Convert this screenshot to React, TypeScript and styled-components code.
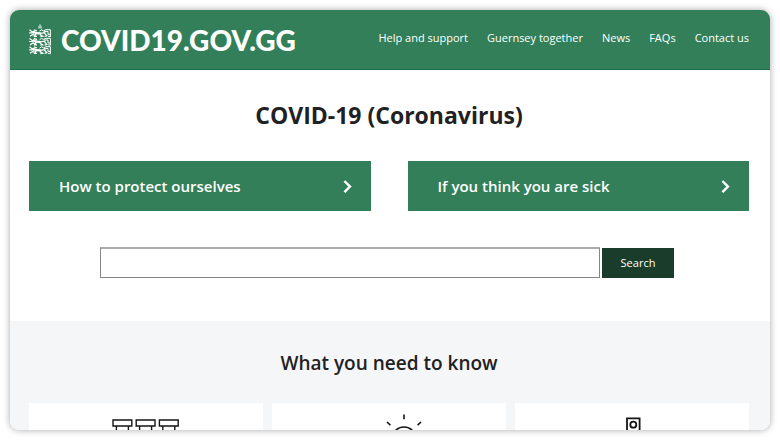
import React from "react";
import styled, { createGlobalStyle } from "styled-components";

const green = "#327f59";

const GlobalStyle = createGlobalStyle`
  *, *::before, *::after { box-sizing: border-box; }
  body {
    margin: 0;
    background: #fff;
    color: #1f2123;
    font-family: "Open Sans", "Noto Sans", sans-serif;
  }
  h1, h2 { margin: 0; }
`;

const Stage = styled.div`
  height: 100vh;
  padding: 10px;
`;

const Frame = styled.div`
  display: flex;
  flex-direction: column;
  height: 100%;
  overflow: hidden;
  border-radius: 9px;
  background: #fff;
  box-shadow: 0 0 7px rgba(0, 0, 0, 0.34);
`;

const Header = styled.header`
  display: flex;
  flex-shrink: 0;
  align-items: center;
  justify-content: space-between;
  height: 60px;
  padding: 0 21px 0 19px;
  background: ${green};
  border-bottom: 1px solid #1f7048;
`;

const Brand = styled.a`
  display: flex;
  align-items: center;
  gap: 9px;
  color: #fff;
  text-decoration: none;
`;

const BrandName = styled.span`
  font-family: Lato, "Open Sans", sans-serif;
  font-size: 28px;
  font-weight: 900;
  line-height: 40px;
`;

const Nav = styled.nav`
  display: flex;
  gap: 19px;
  padding-bottom: 4px;
`;

const NavLink = styled.a`
  color: #fff;
  font-size: 11px;
  line-height: 20px;
  text-decoration: none;
  white-space: nowrap;
`;

const Intro = styled.section`
  flex-shrink: 0;
  padding: 28px 21px 43px 19px;
`;

const Title = styled.h1`
  font-size: 23px;
  font-weight: 700;
  line-height: 34px;
  text-align: center;
`;

const Actions = styled.div`
  display: grid;
  grid-template-columns: 1fr 1fr;
  gap: 37px;
  margin-top: 29px;
`;

const ActionLink = styled.a`
  display: flex;
  align-items: center;
  justify-content: space-between;
  height: 50px;
  padding: 0 18px 0 30px;
  background: ${green};
  color: #fff;
  font-size: 15px;
  font-weight: 600;
  text-decoration: none;
`;

const SearchForm = styled.form`
  display: flex;
  align-items: flex-end;
  gap: 2px;
  margin: 36px 75px 0 71px;
`;

const SearchInput = styled.input`
  flex: 1;
  min-width: 0;
  height: 31px;
  padding: 0 8px;
  border: 1px solid #858585;
  border-top: 2px solid #ababab;
  border-radius: 0;
  background: #fff;
  font: inherit;
  font-size: 11px;
`;

const SearchButton = styled.button`
  width: 72px;
  height: 30px;
  padding: 0 0 2px;
  border: 0;
  background: #1a3c2a;
  color: #fff;
  font: inherit;
  font-size: 11px;
`;

const Know = styled.section`
  flex: 1 0 auto;
  padding: 28px 21px 40px 19px;
  background: #f4f6f8;
`;

const Subtitle = styled.h2`
  font-size: 19px;
  font-weight: 600;
  line-height: 28px;
  text-align: center;
`;

const Cards = styled.div`
  display: grid;
  grid-template-columns: repeat(3, 1fr);
  gap: 9px;
  margin-top: 26px;
`;

const Card = styled.a`
  display: flex;
  justify-content: center;
  padding: 11px 0 24px;
  background: #fff;
  color: #151515;
`;

const Lion = ({ y }: { y: number }) => (
  <g transform={`translate(0 ${y})`} fill="none" stroke="#fff">
    <path strokeWidth="1.2" d="M0.5 0.8L2.6 2.4L5 3.3M0.2 3.9L3.2 3.7L5.4 4.4M1 7.3L3.4 5.6L6 6" />
    <path strokeWidth="2.2" d="M4 2.4L7.2 4.1L11.6 4.4" />
    <path strokeWidth="1.3" d="M5 0.8L8 2M11 4.3L16.4 3.6M10.8 5.4L13.6 7.2L11.4 7.6M7 5L5.6 7.3H8M15.4 4L17.8 6.8L15.6 7.5" />
    <path strokeWidth="1" d="M10.5 2.2L12.4 0.8L14.5 1.8L17 0.7H21.4V7.4M14.8 2.4H19V5.4H21.4M19 7.4H22" />
  </g>
);

const Crest = () => (
  <svg width="23" height="31" viewBox="0 0 23 31" aria-hidden="true">
    <path fill="#a9cdba" d="M10.5 0h1v1.2l1.4 1v2.3h-3.7V2.2l1.3-1z" />
    <Lion y={5} />
    <Lion y={13.6} />
    <Lion y={22} />
  </svg>
);

const Chevron = () => (
  <svg width="10" height="14" viewBox="0 0 10 14" fill="none" stroke="#fff" strokeWidth="2.4" aria-hidden="true">
    <path d="M1.4 2L7 7.6L1.4 13.2" />
  </svg>
);

const SeatsIcon = () => (
  <svg width="70" height="44" viewBox="0 0 70 44" fill="none" stroke="currentColor" strokeWidth="1.4" aria-hidden="true">
    {[2, 25.2, 48.4].map((x) => (
      <g key={x} transform={`translate(${x} 6)`}>
        <path d="M0 0H18.8V6H0ZM3.4 6V34M15.4 6V34M3.4 20H15.4" />
      </g>
    ))}
  </svg>
);

const SunIcon = () => (
  <svg width="74" height="44" viewBox="0 0 74 44" fill="none" stroke="currentColor" strokeWidth="1.6" aria-hidden="true">
    <circle cx="52" cy="25" r="12" />
    <path d="M52 0.6V5.2M35 8L38.4 11.2M69 8L65.6 11.2" />
  </svg>
);

const DispenserIcon = () => (
  <svg width="18" height="44" viewBox="0 0 18 44" fill="none" stroke="currentColor" strokeWidth="1.8" aria-hidden="true">
    <path d="M4 4.3H16.6V38H4Z" />
    <circle cx="10.3" cy="10.7" r="3" />
  </svg>
);

const navItems = ["Help and support", "Guernsey together", "News", "FAQs", "Contact us"];
const actions = ["How to protect ourselves", "If you think you are sick"];
const topics = [
  { href: "#seating", icon: <SeatsIcon /> },
  { href: "#daily-life", icon: <SunIcon /> },
  { href: "#hygiene", icon: <DispenserIcon /> },
];

export default function App() {
  return (
    <>
      <GlobalStyle />
      <Stage>
        <Frame>
          <Header>
            <Brand href="#home">
              <Crest />
              <BrandName>COVID19.GOV.GG</BrandName>
            </Brand>
            <Nav>
              {navItems.map((item) => (
                <NavLink key={item} href="#">{item}</NavLink>
              ))}
            </Nav>
          </Header>
          <Intro>
            <Title>COVID-19 (Coronavirus)</Title>
            <Actions>
              {actions.map((label) => (
                <ActionLink key={label} href="#">
                  {label}
                  <Chevron />
                </ActionLink>
              ))}
            </Actions>
            <SearchForm role="search" onSubmit={(event) => event.preventDefault()}>
              <SearchInput type="search" aria-label="Search" />
              <SearchButton type="submit">Search</SearchButton>
            </SearchForm>
          </Intro>
          <Know>
            <Subtitle>What you need to know</Subtitle>
            <Cards>
              {topics.map(({ href, icon }) => (
                <Card key={href} href={href}>{icon}</Card>
              ))}
            </Cards>
          </Know>
        </Frame>
      </Stage>
    </>
  );
}
